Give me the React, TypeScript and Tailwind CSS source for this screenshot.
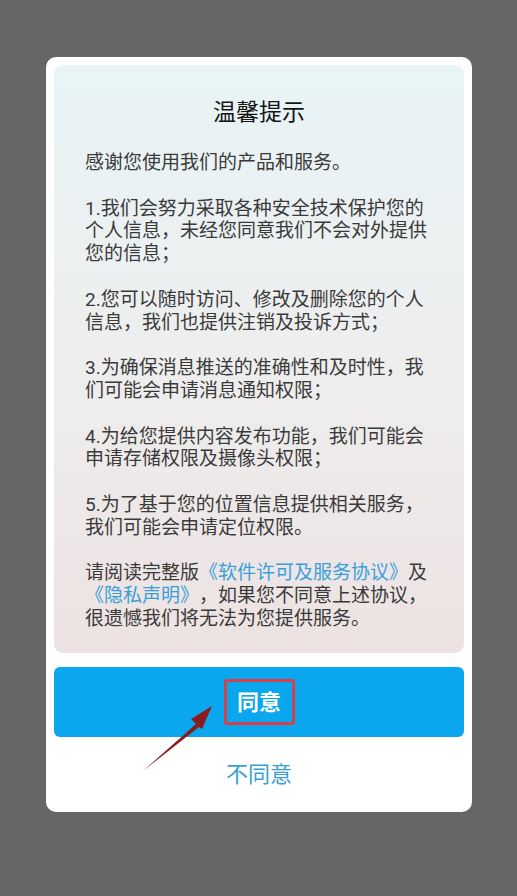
import React from 'react';

const font = { fontFamily: 'Roboto, "Noto Sans CJK SC", "Noto Sans", sans-serif' };

const Paragraph: React.FC<{ lines: React.ReactNode[] }> = ({ lines }) => (
  <p className="whitespace-nowrap">
    {lines.map((l, i) => (
      <React.Fragment key={i}>
        {l}
        {i < lines.length - 1 && <br />}
      </React.Fragment>
    ))}
  </p>
);

const App: React.FC = () => {
  return (
    <div className="min-h-[896px] w-full bg-[#666666] pt-[57px] [text-spacing-trim:space-all]" style={font}>
      <div className="relative ml-[46px] w-[426px] rounded-[10px] bg-white px-[8px] pt-[8px]">
        <div className="h-[588px] rounded-[9px] bg-gradient-to-b from-[#e8f4f6] via-[#eeeeee] to-[#ede2e2] px-[31px] pt-[32px]">
          <h1 className="mb-[23px] text-center text-[23px] leading-[32px] text-[#141414]">温馨提示</h1>
          <div className="flex flex-col gap-[22.8px] text-[19px] leading-[22.8px] text-[#3a3a3a]">
            <Paragraph lines={['感谢您使用我们的产品和服务。']} />
            <Paragraph
              lines={['1.我们会努力采取各种安全技术保护您的', '个人信息，未经您同意我们不会对外提供', '您的信息；']}
            />
            <Paragraph lines={['2.您可以随时访问、修改及删除您的个人', '信息，我们也提供注销及投诉方式；']} />
            <Paragraph lines={['3.为确保消息推送的准确性和及时性，我', '们可能会申请消息通知权限；']} />
            <Paragraph lines={['4.为给您提供内容发布功能，我们可能会', '申请存储权限及摄像头权限；']} />
            <Paragraph lines={['5.为了基于您的位置信息提供相关服务，', '我们可能会申请定位权限。']} />
            <Paragraph
              lines={[
                <>
                  请阅读完整版<span className="text-[#3a9fd8]">《软件许可及服务协议》</span>及
                </>,
                <>
                  <span className="text-[#3a9fd8]">《隐私声明》</span>，如果您不同意上述协议，
                </>,
                '很遗憾我们将无法为您提供服务。',
              ]}
            />
          </div>
        </div>

        <button className="mt-[14px] flex h-[70px] w-full items-center justify-center rounded-[6px] bg-[#0aa6ee]">
          <span className="flex h-[46px] w-[71px] items-center justify-center rounded-[3px] border-[3px] border-[#d4414b] text-[22px] font-bold text-white">
            同意
          </span>
        </button>

        <div className="flex h-[75px] items-center justify-center text-[22px] text-[#3a9fd3]">不同意</div>

        {/* annotation arrow pointing at the agree button */}
        <svg
          className="pointer-events-none absolute left-[-46px] top-[-57px]"
          width="517"
          height="896"
          viewBox="0 0 517 896"
        >
          <polygon points="143,771 196,724 191,719 212,706 202,729 199,727" fill="#8a1c1f" />
        </svg>
      </div>
    </div>
  );
};

export default App;
